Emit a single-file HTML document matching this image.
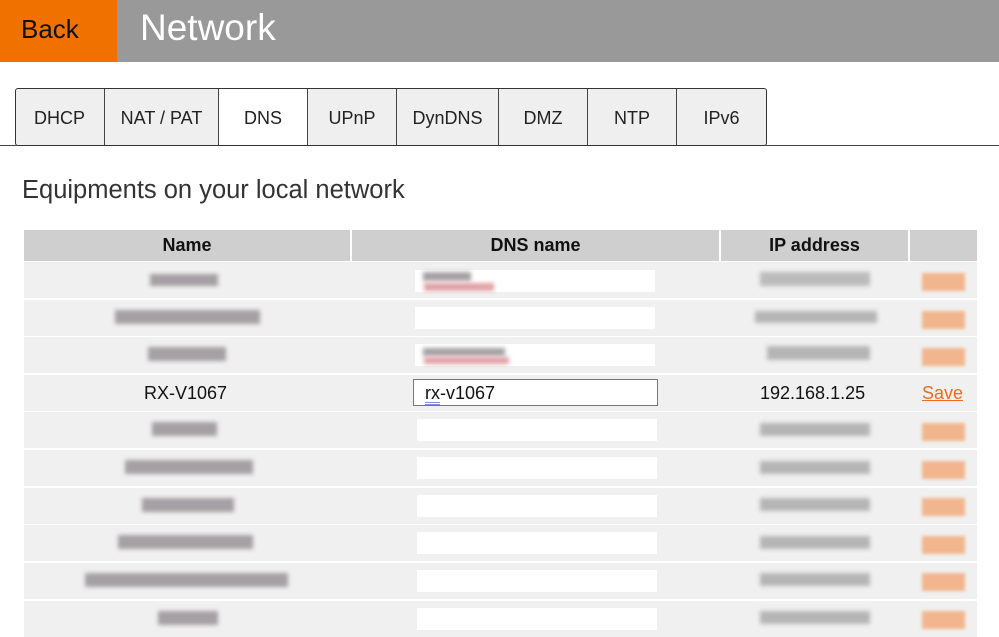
<!DOCTYPE html><html><head><style>
body{margin:0;width:999px;height:630px;overflow:hidden;background:#fff;font-family:"Liberation Sans",sans-serif;position:relative}
.a{position:absolute}
.tab{position:absolute;top:89px;height:56px;background:#efefef;border-left:1px solid #444;font-size:18px;color:#222;text-align:center;line-height:58px;box-sizing:border-box}
.hd{position:absolute;top:230px;height:31px;background:#cfcfcf;font-weight:bold;font-size:18px;line-height:31px;text-align:center;color:#111}
.row{position:absolute;left:24px;width:953px;height:36px;background:#f0f0f0}
.b{position:absolute;filter:blur(2px);background:#a5a0a3}
.in{position:absolute;left:415px;width:240px;height:22px;background:#fff}
.sv{position:absolute;left:922px;width:43px;height:18px;background:#f2b68e;filter:blur(1.5px)}
</style></head><body>
<div class="a" style="left:0;top:0;width:117px;height:62px;background:#f07000"></div>
<div class="a" style="left:117px;top:0;width:882px;height:62px;background:#999"></div>
<div class="a" style="left:21px;top:14px;font-size:26px;color:#111">Back</div>
<div class="a" style="left:140px;top:7px;font-size:37px;color:#fff">Network</div>
<div class="a" style="left:0;top:145px;width:999px;height:1px;background:#444"></div>
<div class="a" style="left:15px;top:88px;width:752px;height:58px;border-radius:3px;box-sizing:border-box;background:#efefef"></div>
<div class="tab" style="left:15px;width:89px;border-left:none">DHCP</div>
<div class="tab" style="left:104px;width:114px">NAT / PAT</div>
<div class="tab" style="left:218px;width:89px;background:#fff;height:57px">DNS</div>
<div class="tab" style="left:307px;width:89px">UPnP</div>
<div class="tab" style="left:396px;width:102px">DynDNS</div>
<div class="tab" style="left:498px;width:89px">DMZ</div>
<div class="tab" style="left:587px;width:89px">NTP</div>
<div class="tab" style="left:676px;width:90px">IPv6</div>
<div class="a" style="left:15px;top:88px;width:752px;height:58px;border:1px solid #333;border-radius:3px;box-sizing:border-box"></div>
<div class="a" style="left:22px;top:176px;font-size:25.5px;color:#333">Equipments on your local network</div>
<div class="hd" style="left:24px;width:326px">Name</div>
<div class="hd" style="left:352px;width:367px">DNS name</div>
<div class="hd" style="left:721px;width:187px">IP address</div>
<div class="hd" style="left:910px;width:67px"></div>

<div class="row" style="top:262px"></div><div class="b" style="left:150px;top:274px;width:68px;height:12px"></div><div class="in" style="top:270px"></div><div class="b" style="left:423px;top:272px;width:48px;height:9px"></div><div class="b" style="left:424px;top:283px;width:70px;height:8px;background:#e0a0a6"></div><div class="b" style="left:760px;top:272px;width:110px;height:14px;background:#bbb"></div><div class="sv" style="top:273px"></div>
<div class="row" style="top:300px"></div><div class="b" style="left:115px;top:310px;width:145px;height:14px"></div><div class="in" style="top:307px"></div><div class="b" style="left:755px;top:311px;width:122px;height:12px;background:#b5b5b5"></div><div class="sv" style="top:311px"></div>
<div class="row" style="top:337px"></div><div class="b" style="left:148px;top:347px;width:78px;height:14px"></div><div class="in" style="top:344px"></div><div class="b" style="left:423px;top:348px;width:82px;height:8px"></div><div class="b" style="left:424px;top:357px;width:85px;height:7px;background:#e0a0a6"></div><div class="b" style="left:767px;top:346px;width:103px;height:14px;background:#b5b5b5"></div><div class="sv" style="top:348px"></div>
<div class="row" style="top:375px"></div>
<div class="a" style="left:144px;top:383px;font-size:18px;color:#111">RX-V1067</div>
<div class="a" style="left:413px;top:379px;width:245px;height:27px;background:#fff;border:1px solid #777;box-sizing:border-box"></div>
<div class="a" style="left:425px;top:383px;font-size:18px;color:#111">rx-v1067</div>
<div class="a" style="left:425px;top:402px;width:15px;border-top:1px solid #7a8fe8;border-bottom:1px solid #7a8fe8;height:1px"></div>
<div class="a" style="left:760px;top:383px;font-size:18px;color:#111">192.168.1.25</div>
<div class="a" style="left:922px;top:383px;font-size:18px;color:#e86d1f;text-decoration:underline">Save</div>
<div class="row" style="top:412px"></div><div class="b" style="left:152px;top:422px;width:65px;height:14px"></div><div class="in" style="top:419px;left:417px"></div><div class="b" style="left:760px;top:423px;width:110px;height:13px;background:#b5b5b5"></div><div class="sv" style="top:423px"></div>
<div class="row" style="top:450px"></div><div class="b" style="left:125px;top:460px;width:128px;height:14px"></div><div class="in" style="top:457px;left:417px"></div><div class="b" style="left:760px;top:461px;width:110px;height:13px;background:#b5b5b5"></div><div class="sv" style="top:461px"></div>
<div class="row" style="top:488px"></div><div class="b" style="left:142px;top:498px;width:92px;height:14px"></div><div class="in" style="top:495px;left:417px"></div><div class="b" style="left:760px;top:498px;width:110px;height:13px;background:#b5b5b5"></div><div class="sv" style="top:498px"></div>
<div class="row" style="top:525px"></div><div class="b" style="left:118px;top:535px;width:135px;height:14px"></div><div class="in" style="top:532px;left:417px"></div><div class="b" style="left:760px;top:536px;width:110px;height:13px;background:#b5b5b5"></div><div class="sv" style="top:536px"></div>
<div class="row" style="top:563px"></div><div class="b" style="left:85px;top:573px;width:203px;height:14px"></div><div class="in" style="top:570px;left:417px"></div><div class="b" style="left:760px;top:573px;width:110px;height:13px;background:#b5b5b5"></div><div class="sv" style="top:573px"></div>
<div class="row" style="top:601px"></div><div class="b" style="left:158px;top:611px;width:60px;height:14px"></div><div class="in" style="top:608px;left:417px"></div><div class="b" style="left:760px;top:611px;width:110px;height:13px;background:#b5b5b5"></div><div class="sv" style="top:611px"></div>
</body></html>
